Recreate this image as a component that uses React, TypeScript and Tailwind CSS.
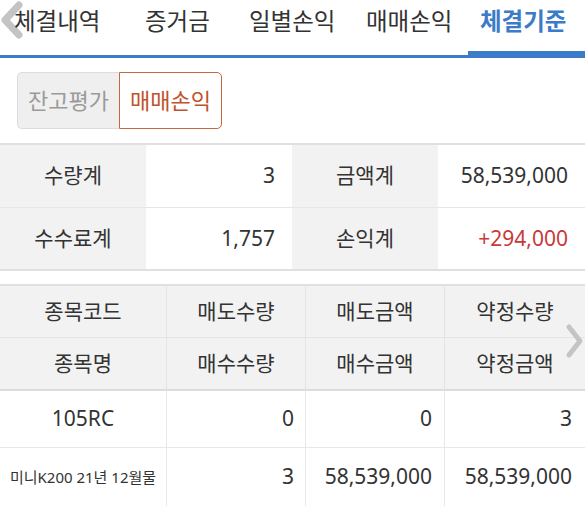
import React from "react";

const font = "font-['Noto_Sans','Noto_Sans_CJK_KR',sans-serif]";

export default function App() {
  return (
    <div className={`w-[585px] h-[506px] overflow-hidden bg-white relative text-[#333] ${font}`}>
      {/* Tabs */}
      <div className="relative h-[58px] border-b-[3px] border-[#3b7bc8] flex items-start">
        <svg className="absolute left-0 top-[1px]" width="24" height="38" viewBox="0 0 24 38">
          <path d="M19 4 L5 19 L19 34" fill="none" stroke="#c4c4c4" strokeWidth="7" strokeLinejoin="round" strokeLinecap="round" />
        </svg>
        <div className="relative flex text-[23.5px] leading-[42px] whitespace-nowrap">
          <span className="ml-[14px] w-[131px]">체결내역</span>
          <span className="w-[104px]">증거금</span>
          <span className="w-[117px]">일별손익</span>
          <span className="w-[114px]">매매손익</span>
          <span className="font-bold text-[#3b7bc8]">체결기준</span>
        </div>
        <div className="absolute left-[468px] right-0 bottom-[-3px] h-[7px] bg-[#3b7bc8]" />
      </div>

      {/* Segmented */}
      <div className="mt-[14px] ml-[17px] flex h-[57px] w-[205px] text-[22px]">
        <div className="w-[102px] flex items-center justify-center bg-[#efefef] border border-r-0 border-[#dcdcdc] rounded-l-[5px] text-[#9a9a9a]">
          잔고평가
        </div>
        <div className="flex-1 flex items-center justify-center bg-white border border-[#c8683f] rounded-r-[5px] text-[#c0532a]">
          매매손익
        </div>
      </div>

      {/* Summary */}
      <div className="mt-[14px] border-t-2 border-[#e0e0e0] grid grid-cols-[146px_146px_146px_1fr] text-[21px]">
        <div className="h-[63px] flex items-center justify-center bg-[#f2f2f2] border-b border-[#e6e6e6]">수량계</div>
        <div className="h-[63px] flex items-center justify-end pr-[17px] bg-white border-b border-[#e6e6e6]">3</div>
        <div className="h-[63px] flex items-center justify-center bg-[#f2f2f2] border-b border-[#e6e6e6]">금액계</div>
        <div className="h-[63px] flex items-center justify-end pr-[17px] bg-white border-b border-[#e6e6e6]">58,539,000</div>
        <div className="h-[63px] flex items-center justify-center bg-[#f2f2f2] border-b-2 border-[#e0e0e0]">수수료계</div>
        <div className="h-[63px] flex items-center justify-end pr-[17px] bg-white border-b-2 border-[#e0e0e0]">1,757</div>
        <div className="h-[63px] flex items-center justify-center bg-[#f2f2f2] border-b-2 border-[#e0e0e0]">손익계</div>
        <div className="h-[63px] flex items-center justify-end pr-[17px] bg-white border-b-2 border-[#e0e0e0] text-[#c83a3a]">+294,000</div>
      </div>

      {/* Grid table */}
      <div className="relative mt-[13px] border-t-2 border-[#e0e0e0] grid grid-cols-[167px_139px_139px_1fr] text-[21px]">
        {["종목코드", "매도수량", "매도금액", "약정수량"].map((t, i) => (
          <div key={t} className={`h-[52px] flex items-center justify-center bg-[#f2f2f2] border-b border-[#e4e4e4] ${i < 3 ? "border-r" : ""}`}>{t}</div>
        ))}
        {["종목명", "매수수량", "매수금액", "약정금액"].map((t, i) => (
          <div key={t} className={`h-[53px] flex items-center justify-center bg-[#f2f2f2] border-b-2 border-[#dcdcdc] ${i < 3 ? "border-r border-r-[#e4e4e4]" : ""}`}>{t}</div>
        ))}
        <div className="h-[57px] flex items-center justify-center border-b border-r border-[#e8e8e8]">105RC</div>
        <div className="h-[57px] flex items-center justify-end pr-[11px] border-b border-r border-[#e8e8e8]">0</div>
        <div className="h-[57px] flex items-center justify-end pr-[12px] border-b border-r border-[#e8e8e8]">0</div>
        <div className="h-[57px] flex items-center justify-end pr-[13px] border-b border-[#e8e8e8]">3</div>
        <div className="h-[58px] flex items-center justify-center border-r border-[#e8e8e8] text-[15px] whitespace-nowrap">미니K200 21년 12월물</div>
        <div className="h-[58px] flex items-center justify-end pr-[11px] border-r border-[#e8e8e8]">3</div>
        <div className="h-[58px] flex items-center justify-end pr-[12px] border-r border-[#e8e8e8]">58,539,000</div>
        <div className="h-[58px] flex items-center justify-end pr-[13px]">58,539,000</div>
        <svg className="absolute left-[564px] top-[37px]" width="20" height="36" viewBox="0 0 20 36">
          <path d="M5 4 L16 18 L5 32" fill="none" stroke="#c4c4c4" strokeWidth="5" strokeLinejoin="round" strokeLinecap="round" />
        </svg>
      </div>
    </div>
  );
}
